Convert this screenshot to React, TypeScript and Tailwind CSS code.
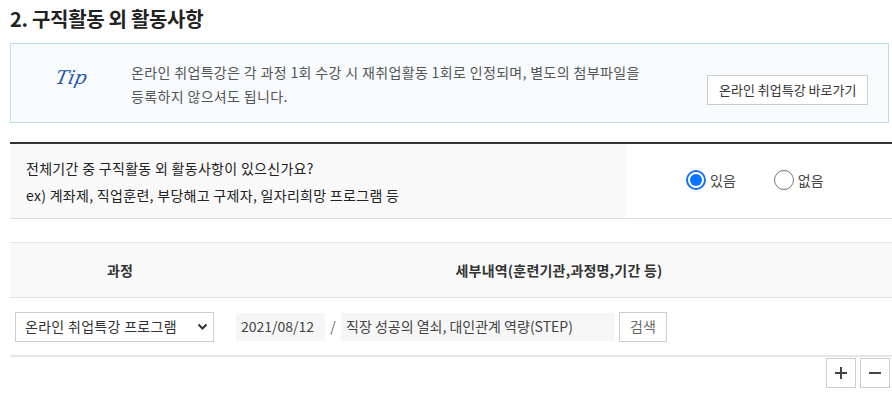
import React from "react";

const font = { fontFamily: '"Noto Sans CJK KR", "Noto Sans", sans-serif' };

export default function App() {
  return (
    <div className="w-[892px] h-[400px] bg-white text-[#333] overflow-hidden" style={font}>
      <div className="pl-[10px]">
        {/* Title */}
        <h2 className="pt-[4px] h-[43px] text-[20px] font-bold leading-[30px] text-[#222] tracking-[-0.3px]">
          2. 구직활동 외 활동사항
        </h2>

        {/* Tip box */}
        <div className="w-[879px] h-[80px] border border-[#bfdbe8] bg-[#f7fbfe] flex">
          <div className="w-[120px] pl-[45px] pt-[24px] text-[19px] italic text-[#2453a8] leading-none" style={{ fontFamily: '"DejaVu Serif", serif' }}>
            <span className="inline-block -skew-x-12 font-light">Tip</span>
          </div>
          <p className="w-[560px] pt-[16px] text-[14px] leading-[24px] text-[#555] tracking-[0.35px]">
            온라인 취업특강은 각 과정 1회 수강 시 재취업활동 1회로 인정되며, 별도의 첨부파일을
            <br />
            등록하지 않으셔도 됩니다.
          </p>
          <div className="flex-1 flex items-end pb-[17px] pl-[16px]">
            <button className="h-[30px] px-[11px] border border-[#ccc] bg-white text-[13px] text-[#333]">
              온라인 취업특강 바로가기
            </button>
          </div>
        </div>

        {/* Question */}
        <div className="mt-[19px] border-t-2 border-[#333] border-b border-b-[#ddd] flex h-[77px]">
          <div className="w-[616px] bg-[#f9f9f9] pl-[16px] pt-[11px] text-[14px] leading-[27px] text-[#222] tracking-[0.3px]">
            <p>전체기간 중 구직활동 외 활동사항이 있으신가요?</p>
            <p>ex) 계좌제, 직업훈련, 부당해고 구제자, 일자리희망 프로그램 등</p>
          </div>
          <div className="flex-1 flex items-center pl-[60px] gap-[38px] pb-[2px] text-[14px] text-[#444]">
            <label className="flex items-center gap-[4px]">
              <span className="w-[20px] h-[20px] rounded-full border-2 border-[#1a73e8] flex items-center justify-center">
                <span className="w-[12px] h-[12px] rounded-full bg-[#0a73ff]" />
              </span>
              있음
            </label>
            <label className="flex items-center gap-[4px]">
              <span className="w-[20px] h-[20px] rounded-full border border-[#777]" />
              없음
            </label>
          </div>
        </div>

        {/* Table */}
        <div className="mt-[23px] border-t border-[#e3e3e3]">
          <div className="flex h-[55px] bg-[#f9f9f9] border-b border-[#e3e3e3] text-[14px] font-bold text-[#333]">
            <div className="w-[220px] flex items-center justify-center">과정</div>
            <div className="flex-1 flex items-center justify-center pr-[4px] tracking-[0.2px]">세부내역(훈련기관,과정명,기간 등)</div>
          </div>
          <div className="flex items-center h-[59px] border-b-2 border-[#e5e5e5] text-[14px] text-[#333]">
            <div className="w-[220px] pl-[5px]">
              <div className="w-[199px] h-[30px] border border-[#ccc] flex items-center justify-between pl-[9px] pr-[5px] bg-white">
                <span className="tracking-[0.3px]">온라인 취업특강 프로그램</span>
                <svg width="11" height="8" viewBox="0 0 11 8">
                  <path d="M1.5 1.5 L5.5 5.5 L9.5 1.5" fill="none" stroke="#333" strokeWidth="2" />
                </svg>
              </div>
            </div>
            <div className="flex items-center pl-[6px]">
              <div className="w-[89px] h-[28px] bg-[#f6f6f6] flex items-center pl-[5px] text-[#444]">2021/08/12</div>
              <span className="w-[16px] text-center text-[#666]">/</span>
              <div className="w-[273px] h-[28px] bg-[#f6f6f6] flex items-center pl-[5px] text-[#444]">
                직장 성공의 열쇠, 대인관계 역량(STEP)
              </div>
              <button className="ml-[5px] w-[48px] h-[30px] border border-[#ccc] bg-white text-[14px] text-[#666]">검색</button>
            </div>
          </div>
          <div className="flex justify-end gap-[4px] pt-[1px] pr-[2px]">
            <button className="w-[30px] h-[30px] border border-[#ccc] bg-white flex items-center justify-center">
              <svg width="12" height="12" viewBox="0 0 12 12">
                <path d="M6 0 V12 M0 6 H12" stroke="#444" strokeWidth="2" />
              </svg>
            </button>
            <button className="w-[30px] h-[30px] border border-[#ccc] bg-white flex items-center justify-center">
              <svg width="12" height="12" viewBox="0 0 12 12">
                <path d="M0 6 H12" stroke="#444" strokeWidth="2" />
              </svg>
            </button>
          </div>
        </div>
      </div>
    </div>
  );
}
